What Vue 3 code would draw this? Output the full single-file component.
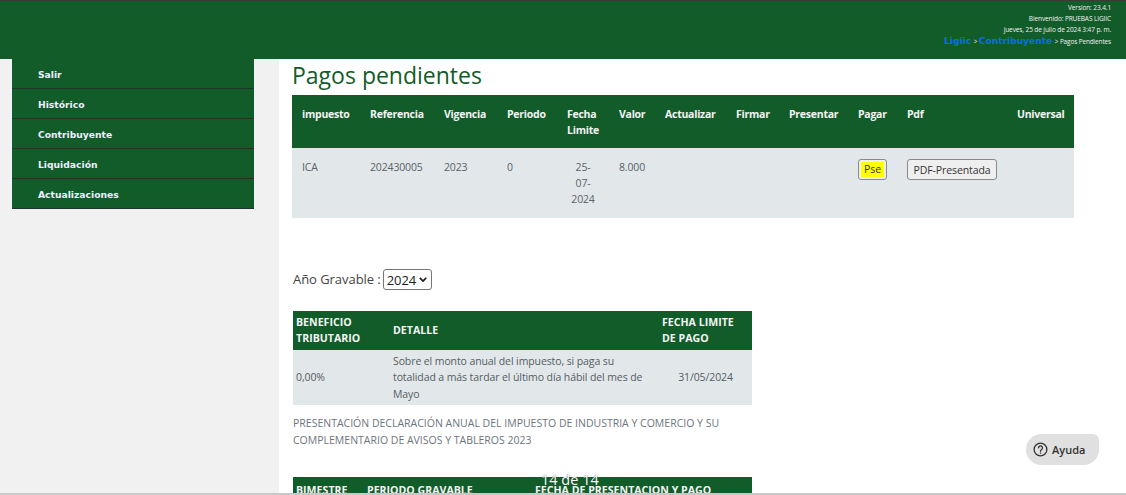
<script setup>
const menu = ['Salir', 'Histórico', 'Contribuyente', 'Liquidación', 'Actualizaciones']
const heads = ['impuesto', 'Referencia', 'Vigencia', 'Periodo', 'Fecha Limite', 'Valor', 'Actualizar', 'Firmar', 'Presentar', 'Pagar', 'Pdf', 'Universal']
</script>

<template>
  <div class="page">
    <header class="top">
      <div class="meta">Version: 23.4.1</div>
      <div class="meta">Bienvenido: PRUEBAS LIGIIC</div>
      <div class="meta">jueves, 25 de julio de 2024 3:47 p. m.</div>
      <div class="crumbs"><a>Ligiic</a> &gt; <a>Contribuyente</a> &gt; Pagos Pendientes</div>
    </header>
    <div class="body">
      <aside class="side">
        <nav class="menu">
          <div v-for="m in menu" :key="m" class="item">{{ m }}</div>
        </nav>
      </aside>
      <main class="main">
        <h1>Pagos pendientes</h1>
        <table class="t1">
          <thead>
            <tr><th v-for="h in heads" :key="h">{{ h }}</th></tr>
          </thead>
          <tbody>
            <tr>
              <td>ICA</td>
              <td>202430005</td>
              <td>2023</td>
              <td>0</td>
              <td class="ctr">25-<br>07-<br>2024</td>
              <td>8.000</td>
              <td></td>
              <td></td>
              <td></td>
              <td><button class="btn pse"><span class="mark">Pse</span></button></td>
              <td><button class="btn pdf">PDF-Presentada</button></td>
              <td></td>
            </tr>
          </tbody>
        </table>
        <div class="year">
          <label>Año Gravable :</label>
          <span class="selwrap">
            <select class="sel"><option>2024</option></select>
            <svg class="chev" width="8" height="5" viewBox="0 0 10 6" fill="none" stroke="#222" stroke-width="2.2">
              <path d="M1 1l4 4 4-4" />
            </svg>
          </span>
        </div>
        <table class="t2">
          <thead>
            <tr><th>BENEFICIO TRIBUTARIO</th><th>DETALLE</th><th>FECHA LIMITE DE PAGO</th></tr>
          </thead>
          <tbody>
            <tr>
              <td>0,00%</td>
              <td>Sobre el monto anual del impuesto, si paga su totalidad a más tardar el último día hábil del mes de Mayo</td>
              <td class="ctr">31/05/2024</td>
            </tr>
          </tbody>
        </table>
        <p class="note">PRESENTACIÓN DECLARACIÓN ANUAL DEL IMPUESTO DE INDUSTRIA Y COMERCIO Y SU COMPLEMENTARIO DE AVISOS Y TABLEROS 2023</p>
        <div class="t3">
          <span class="c1">BIMESTRE</span>
          <span class="c2">PERIODO GRAVABLE</span>
          <span class="c3">FECHA DE PRESENTACION Y PAGO</span>
        </div>
      </main>
    </div>
    <div class="pager">14 de 14</div>
    <div class="help">
      <svg width="15" height="15" viewBox="0 0 16 16" fill="none" stroke="#333" stroke-width="1.4">
        <circle cx="8" cy="8" r="6.8" />
        <path d="M5.9 6.2a2.1 2.1 0 1 1 3.3 1.8c-.8.5-1.2.9-1.2 1.8" stroke-linecap="round" />
        <circle cx="8" cy="11.8" r=".5" fill="#333" stroke-width=".6" />
      </svg>
      <span>Ayuda</span>
    </div>
  </div>
</template>

<style>
html, body { margin: 0; overflow: hidden; background: #fff; }
</style>

<style scoped>
.page {
  position: relative;
  width: 1126px;
  height: 495px;
  overflow: hidden;
  font-family: "Open Sans", "Noto Sans", sans-serif;
  box-sizing: border-box;
  border-bottom: 2px solid #c8c8c8;
  background: #fff;
}
.top {
  height: 59px;
  box-sizing: border-box;
  background: #115c29;
  border-top: 1px solid #3a3a3a;
  padding: 1px 15px 0 0;
  text-align: right;
  color: #f2f2f2;
}
.meta {
  font-size: 6.5px;
  line-height: 11px;
  letter-spacing: -0.1px;
}
.crumbs {
  font-size: 6.4px;
  line-height: 12px;
  letter-spacing: -0.1px;
}
.crumbs a {
  color: #0a6ee8;
  font-family: "DejaVu Sans", sans-serif;
  font-weight: 700;
  font-size: 9.1px;
  letter-spacing: 0;
  margin-right: 1px;
}
.body {
  display: flex;
  height: 434px;
}
.side {
  flex: 0 0 279px;
  box-sizing: border-box;
  background: #f1f1f1;
  padding-left: 12px;
}
.menu {
  width: 242px;
}
.item {
  height: 30px;
  box-sizing: border-box;
  background: #115c29;
  border-bottom: 1px solid #20352a;
  padding-left: 26px;
  line-height: 31px;
  color: #eef;
  font-family: "DejaVu Sans", sans-serif;
  font-weight: 700;
  font-size: 9.2px;
}
.main {
  flex: 1;
  padding-left: 13px;
  min-width: 0;
}
h1 {
  margin: 0;
  height: 36px;
  font-size: 23px;
  line-height: 32px;
  font-weight: 400;
  color: #115c29;
}
table {
  border-collapse: collapse;
  table-layout: fixed;
}
.t1 {
  width: 782px;
  font-size: 10.5px;
  letter-spacing: -0.15px;
  color: #5a6268;
}
.t1 th {
  background: #115c29;
  color: #f4f4f4;
  font-weight: 700;
  letter-spacing: -0.25px;
  text-align: left;
  vertical-align: top;
  height: 53px;
  box-sizing: border-box;
  padding: 11px 10px 0;
  line-height: 16px;
}
.t1 td {
  background: #e2e8ea;
  vertical-align: top;
  height: 70px;
  box-sizing: border-box;
  padding: 11px 10px 0;
  line-height: 16px;
}
.t1 td.ctr { text-align: center; }
.t1 th:nth-child(1) { width: 68px; }
.t1 th:nth-child(2) { width: 74px; }
.t1 th:nth-child(3) { width: 63px; }
.t1 th:nth-child(4) { width: 60px; }
.t1 th:nth-child(5) { width: 52px; }
.t1 th:nth-child(6) { width: 46px; }
.t1 th:nth-child(7) { width: 71px; }
.t1 th:nth-child(8) { width: 53px; }
.t1 th:nth-child(9) { width: 69px; }
.t1 th:nth-child(10) { width: 49px; }
.t1 th:nth-child(11) { width: 110px; }
.t1 th:nth-child(12) { width: 67px; }
.btn {
  display: block;
  height: 21px;
  margin: 0;
  padding: 0;
  border: 1px solid #8a8a8a;
  border-radius: 3px;
  background: #efefef;
  font-family: inherit;
  font-size: 10.5px;
  letter-spacing: -0.1px;
  color: #333;
  white-space: nowrap;
}
.pse { width: 29px; }
.pdf { width: 90px; }
.mark {
  display: block;
  background: #ffff00;
  margin: 0 2px;
  line-height: 15px;
}
.year {
  display: flex;
  align-items: center;
  gap: 2px;
  margin-top: 51px;
  height: 21px;
  padding-left: 1px;
  font-size: 13px;
  letter-spacing: -0.05px;
  color: #444;
}
.year label { padding-bottom: 1px; }
.selwrap {
  position: relative;
  display: block;
  width: 49px;
  height: 21px;
}
.sel {
  display: block;
  appearance: none;
  width: 49px;
  height: 21px;
  box-sizing: border-box;
  padding: 0 0 0 3px;
  font-family: inherit;
  font-size: 13px;
  letter-spacing: -0.1px;
  color: #222;
  background: #fff;
  border: 1px solid #767676;
  border-radius: 3px;
}
.chev {
  position: absolute;
  right: 5px;
  top: 8px;
  pointer-events: none;
}
.t2 {
  width: 459px;
  margin: 21px 0 0 1px;
  font-size: 10.5px;
  letter-spacing: -0.1px;
  color: #555c62;
}
.t2 th {
  background: #115c29;
  color: #f4f4f4;
  font-size: 10.6px;
  letter-spacing: 0;
  text-align: left;
  height: 39px;
  box-sizing: border-box;
  padding: 0 3px 2px;
  line-height: 16px;
}
.t2 td {
  background: #e2e8ea;
  height: 55px;
  box-sizing: border-box;
  padding: 0 3px;
  line-height: 16.5px;
}
.t2 td.ctr { text-align: center; }
.t2 th:nth-child(1) { width: 97px; }
.t2 th:nth-child(2) { width: 269px; }
.t2 th:nth-child(3) { width: 93px; }
.note {
  margin: 10px 0 0 1px;
  width: 450px;
  font-size: 10.5px;
  line-height: 17px;
  color: #6c757d;
}
.t3 {
  position: relative;
  margin: 28px 0 0 1px;
  width: 459px;
  height: 20px;
  background: #115c29;
  color: #f4f4f4;
  font-size: 10.6px;
  font-weight: 700;
  line-height: 26px;
  overflow: hidden;
}
.t3 span { position: absolute; top: 0; white-space: nowrap; }
.c1 { left: 3px; }
.c2 { left: 74px; }
.c3 { left: 242px; }
.pager {
  position: absolute;
  left: 541px;
  top: 471px;
  font-size: 14.5px;
  line-height: 18px;
  color: #fff;
  text-shadow: 0 0 1px #333;
}
.help {
  position: absolute;
  left: 1026px;
  top: 434px;
  width: 73px;
  height: 31px;
  box-sizing: border-box;
  padding-left: 7px;
  display: flex;
  align-items: center;
  gap: 4px;
  background: #e0e0e0;
  border-radius: 16px 6px 16px 16px;
  font-size: 11px;
  font-weight: 600;
  color: #333;
}
</style>
